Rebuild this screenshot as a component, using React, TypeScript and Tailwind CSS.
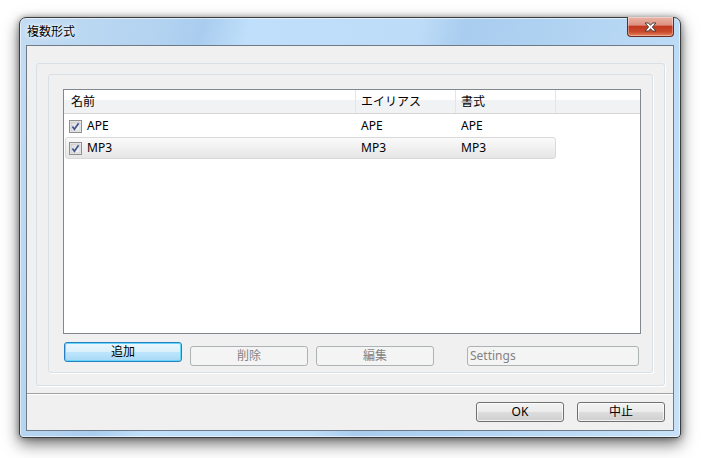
import React from "react";

type Row = { name: string; alias: string; format: string; selected?: boolean };

const rows: Row[] = [
  { name: "APE", alias: "APE", format: "APE" },
  { name: "MP3", alias: "MP3", format: "MP3", selected: true },
];

function CheckBox() {
  return (
    <svg width="13" height="13" viewBox="0 0 13 13" className="shrink-0">
      <defs>
        <linearGradient id="cbfill" x1="0" y1="0" x2="1" y2="1">
          <stop offset="0" stopColor="#d9d9d9" />
          <stop offset="1" stopColor="#f7f7f7" />
        </linearGradient>
      </defs>
      <rect x="0.5" y="0.5" width="12" height="12" fill="#f4f4f4" stroke="#8f8f8f" />
      <rect x="2" y="2" width="9" height="9" fill="url(#cbfill)" stroke="#b9b9b9" strokeWidth="0.6" />
      <path d="M3.4 6.6 L5.4 9.2 L9.6 3.3" fill="none" stroke="#3f5590" strokeWidth="1.7" />
    </svg>
  );
}

function CloseGlyph() {
  return (
    <svg width="13" height="10" viewBox="0 0 13 10">
      <path
        d="M1 1 H4.5 L6.5 3.3 L8.5 1 H12 L8.4 5 L12 9 H8.5 L6.5 6.7 L4.5 9 H1 L4.6 5 Z"
        fill="#ffffff"
        stroke="#43403f"
        strokeWidth="1"
        strokeLinejoin="round"
      />
    </svg>
  );
}

function SysButton({ label }: { label: string }) {
  return (
    <button className="h-[20px] w-[88px] rounded-[3px] border border-[#707070] bg-[linear-gradient(#f2f2f2_0%,#ebebeb_50%,#dddddd_50%,#cfcfcf_100%)] text-[12px] leading-none text-black shadow-[inset_0_0_0_1px_rgba(255,255,255,0.7)]">
      {label}
    </button>
  );
}

function DisabledButton({ label, left, width }: { label: string; left?: boolean; width: string }) {
  return (
    <button
      className={
        "h-[20px] rounded-[3px] border border-[#adb2b5] bg-[#f4f4f4] text-[12px] leading-none text-[#838383] " +
        width +
        (left ? " pl-[2px] text-left" : "")
      }
    >
      {label}
    </button>
  );
}

export default function App() {
  return (
    <div className="h-[458px] w-[703px] bg-white pl-[19px] pt-[17px] [font-family:'Noto_Sans','Noto_Sans_CJK_JP',sans-serif]">
      <div className="flex h-[421px] w-[662px] flex-col rounded-t-[7px] rounded-b-[4px] border border-[#3c3c3c] bg-[linear-gradient(105deg,#c2dcf3_0%,#b3d3f0_18%,#aacdef_24%,#bfdffa_30%,#bddcf7_52%,#a9cdef_58%,#b4d5f3_75%,#c7e2f8_100%)] px-[6px] pb-[6px] shadow-[0_6px_16px_rgba(0,0,0,0.55),0_0_6px_rgba(0,0,0,0.35),inset_0_0_0_1px_rgba(255,255,255,0.55)]">
        {/* title bar */}
        <div className="flex h-[27px] items-start justify-between">
          <span className="mt-[6px] pl-[1px] text-[12px] leading-[16px] text-black [text-shadow:0_0_6px_#ffffff,0_0_3px_#ffffff]">
            複数形式
          </span>
          <button className="-mt-px flex h-[20px] w-[47px] items-center justify-center rounded-b-[4px] border border-t-0 border-[#6b2a22] bg-[linear-gradient(#ebb6a9_0%,#dc9080_42%,#c2391f_50%,#c84a2c_78%,#e4845e_100%)] shadow-[inset_0_0_0_1px_rgba(255,255,255,0.35)]">
            <CloseGlyph />
          </button>
        </div>

        {/* client area */}
        <div className="flex flex-1 flex-col border border-[#6f7a86] bg-[#f0f0f0]">
          <div className="h-[347px] pl-[9px] pt-[17px]">
            <div className="h-[323px] w-[629px] rounded-[3px] border border-[#d7dfe7] pl-[11px] pt-[10px] shadow-[1px_1px_0_#ffffff]">
              <div className="h-[299px] w-[605px] rounded-[3px] border border-[#d7dfe7] pl-[14px] pt-[14px] shadow-[1px_1px_0_#ffffff]">
                {/* list view */}
                <div className="h-[245px] w-[578px] border border-[#828790] bg-white text-[12px] leading-none text-black">
                  <div className="flex h-[24px] border-b border-[#d5d5d5] bg-[linear-gradient(#ffffff_0%,#ffffff_45%,#f1f2f4_45%,#f1f2f4_100%)]">
                    <div className="flex w-[292px] items-center border-r border-[#e2e5e9] pl-[7px]">名前</div>
                    <div className="flex w-[100px] items-center border-r border-[#e2e5e9] pl-[5px]">エイリアス</div>
                    <div className="flex w-[100px] items-center border-r border-[#e2e5e9] pl-[5px]">書式</div>
                  </div>
                  <div className="pl-px pt-px">
                    {rows.map((r) => (
                      <div
                        key={r.name}
                        className={
                          "flex h-[22px] w-[491px] items-center rounded-[3px] border " +
                          (r.selected
                            ? "border-[#d9d9d9] bg-[linear-gradient(#fafafa,#e6e6e6)]"
                            : "border-transparent")
                        }
                      >
                        <div className="flex w-[289px] items-center pl-[3px]">
                          <CheckBox />
                          <span className="ml-[5px]">{r.name}</span>
                        </div>
                        <div className="w-[100px] pl-[6px]">{r.alias}</div>
                        <div className="w-[99px] pl-[6px]">{r.format}</div>
                      </div>
                    ))}
                  </div>
                </div>

                {/* list buttons */}
                <div className="mt-[8px] flex pl-px">
                  <button className="h-[20px] w-[118px] rounded-[3px] border border-[#2b7fbd] bg-[linear-gradient(#eaf6fd_0%,#d9f0fc_50%,#bee6fd_50%,#a7d9f5_100%)] text-[12px] leading-none text-black shadow-[inset_0_0_0_1px_#63d6fb]">
                    追加
                  </button>
                  <div className="ml-[8px]">
                    <DisabledButton label="削除" width="w-[118px]" />
                  </div>
                  <div className="ml-[8px]">
                    <DisabledButton label="編集" width="w-[118px]" />
                  </div>
                  <div className="ml-[33px]">
                    <DisabledButton label="Settings" left width="w-[172px]" />
                  </div>
                </div>
              </div>
            </div>
          </div>

          {/* dialog buttons */}
          <div className="flex flex-1 justify-end gap-[13px] border-t border-[#a0a0a0] pr-[8px] pt-[8px] shadow-[inset_0_1px_0_#ffffff]">
            <SysButton label="OK" />
            <SysButton label="中止" />
          </div>
        </div>
      </div>
    </div>
  );
}
